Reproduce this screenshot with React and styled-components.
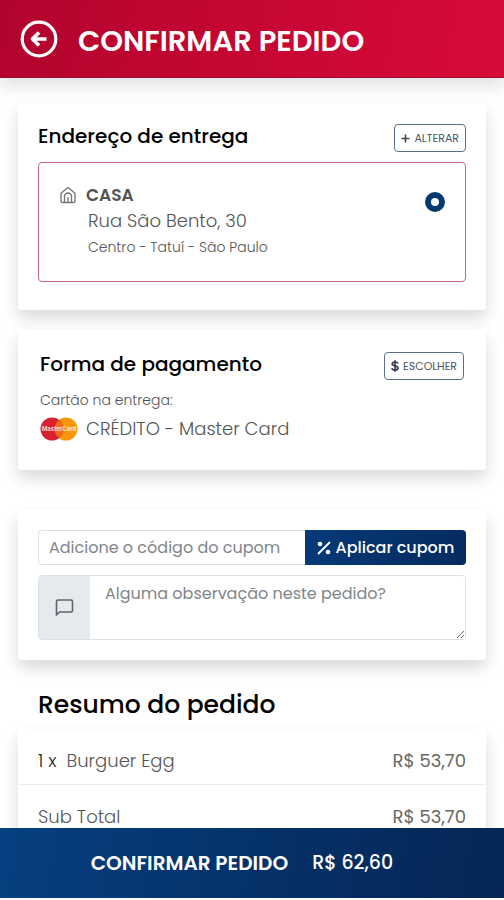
import React from "react";
import styled, { createGlobalStyle } from "styled-components";

const GlobalStyle = createGlobalStyle`
  *, *::before, *::after { box-sizing: border-box; }
  body {
    margin: 0;
    background: #fff;
    color: #111;
    font-family: Poppins, Inter, "Liberation Sans", sans-serif;
    font-size: 18px;
    font-weight: 300;
    line-height: 24px;
  }
  button, input, textarea { font: inherit; }
  h1, h2, p, ul, dl, dd, dt { margin: 0; padding: 0; }
`;

const Page = styled.div`
  display: flex;
  flex-direction: column;
  height: 100vh;
`;

const Header = styled.header`
  flex: none;
  display: flex;
  align-items: center;
  gap: 20px;
  height: 78px;
  padding: 0 20px;
  background: linear-gradient(100deg, #b1042c, #c40632 45%, #d70b3a);
  border-bottom: 1px solid #a00a30;
  box-shadow: 0 8px 16px rgba(0, 0, 0, 0.12);
  z-index: 1;
`;

const BackButton = styled.button`
  display: flex;
  padding: 0;
  border: 0;
  background: none;
  color: #fff;
  cursor: pointer;
`;

const Title = styled.h1`
  color: #fff;
  font-size: 29px;
  font-weight: 600;
  line-height: 40px;
  padding-top: 4px;
`;

const Content = styled.main`
  flex: 1;
  min-height: 0;
  overflow-y: auto;
  scrollbar-width: none;
  display: flex;
  flex-direction: column;
  gap: 20px;
  padding: 26px 18px;
`;

const Card = styled.section`
  flex: none;
  padding: ${(p) => p.$padding || "20px 20px 28px"};
  margin-top: ${(p) => (p.$spaced ? "20px" : "0")};
  background: #fff;
  border-radius: 4px;
  box-shadow: 0 8px 16px rgba(0, 0, 0, 0.15);
`;

const CardHeader = styled.div`
  display: flex;
  align-items: flex-start;
  justify-content: space-between;
`;

const CardTitle = styled.h2`
  color: #000;
  font-size: 20px;
  font-weight: 500;
  line-height: 24px;
`;

const OutlineButton = styled.button`
  display: flex;
  align-items: center;
  gap: 4px;
  height: 28px;
  padding: 0 6px;
  border: 1px solid #5b6e8c;
  border-radius: 4px;
  background: #fff;
  color: #4c5560;
  font-size: 11px;
  font-weight: 400;
  line-height: 16px;
  cursor: pointer;
`;

const AddressOption = styled.label`
  display: grid;
  grid-template-columns: 18px 1fr 20px;
  column-gap: 9px;
  margin-top: 10px;
  padding: 20px;
  min-height: 120px;
  border: 1px solid #c4677f;
  border-radius: 4px;
  color: #555;
  cursor: pointer;
`;

const AddressIcon = styled.span`
  display: flex;
  align-items: center;
  height: 24px;
`;

const AddressName = styled.strong`
  display: block;
  color: #555;
  font-size: 17px;
  font-weight: 600;
`;

const AddressLine = styled.span`
  display: block;
  padding-left: 2px;
  line-height: 28px;
`;

const Small = styled.span`
  display: block;
  color: #555;
  font-size: 14px;
  line-height: 24px;
`;

const AddressRegion = styled(Small)`
  padding-left: 2px;
`;

const PaymentType = styled(Small)`
  margin-top: 8px;
`;

const Radio = styled.input.attrs({ type: "radio" })`
  appearance: none;
  width: 20px;
  height: 20px;
  margin: 9px 0 0;
  border: 6px solid #04396f;
  border-radius: 50%;
  background: #fff;
`;

const PaymentMethod = styled.p`
  display: flex;
  align-items: center;
  gap: 8px;
  line-height: 34px;
  color: #555;
`;

const CouponForm = styled.form`
  display: flex;
  height: 35px;
`;

const CouponInput = styled.input`
  flex: 1;
  min-width: 0;
  padding: 0 10px;
  border: 1px solid #dde1e5;
  border-right: 0;
  border-radius: 4px 0 0 4px;
  color: #444;
  font-size: 16px;
  font-weight: 400;
  &::placeholder { color: #80868b; opacity: 1; }
`;

const CouponButton = styled.button`
  flex: none;
  display: flex;
  align-items: center;
  justify-content: center;
  gap: 5px;
  width: 161px;
  padding: 0;
  border: 0;
  border-radius: 0 4px 4px 0;
  background: linear-gradient(100deg, #063a78, #052b5f);
  color: #fff;
  font-size: 16px;
  font-weight: 500;
  cursor: pointer;
`;

const NoteField = styled.label`
  display: flex;
  height: 65px;
  margin-top: 10px;
  border: 1px solid #dde1e5;
  border-radius: 4px;
  overflow: hidden;
`;

const NoteIcon = styled.span`
  flex: none;
  display: flex;
  align-items: center;
  justify-content: center;
  width: 51px;
  background: #e6eaed;
  color: #5b6472;
`;

const NoteInput = styled.textarea`
  flex: 1;
  min-width: 0;
  padding: 6px 15px;
  border: 0;
  resize: vertical;
  color: #444;
  font-size: 16px;
  font-weight: 400;
  &::placeholder { color: #80868b; opacity: 1; }
`;

const Summary = styled.section`
  flex: none;
  margin-top: 9px;
`;

const SummaryTitle = styled.h2`
  padding: 0 20px;
  color: #000;
  font-size: 25px;
  font-weight: 500;
  line-height: 32px;
`;

const SummaryList = styled.dl`
  margin-top: 8px;
  border-radius: 4px;
  background: #fff;
  box-shadow: 0 8px 16px rgba(0, 0, 0, 0.15);
`;

const SummaryRow = styled.div`
  display: flex;
  justify-content: space-between;
  padding: 20px 20px 11px;
  color: #555;
  & + & { border-top: 1px solid #ededed; }
`;

const Quantity = styled.span`
  margin-right: 10px;
  color: #222;
`;

const Price = styled.dd`
  color: #666;
  font-weight: 400;
`;

const ConfirmButton = styled.button`
  flex: none;
  display: flex;
  align-items: center;
  justify-content: center;
  gap: 24px;
  height: 70px;
  margin-bottom: 2px;
  padding: 0 40px 0 20px;
  border: 0;
  background: linear-gradient(100deg, #073f80, #05336c 45%, #052654);
  color: #fff;
  font-size: 19px;
  z-index: 1;
  cursor: pointer;
`;

const ConfirmLabel = styled.strong`
  font-size: 20px;
  font-weight: 600;
`;

const ConfirmTotal = styled.span`
  font-weight: 500;
`;

function BackIcon() {
  return (
    <svg width="38" height="38" viewBox="0 0 38 38" fill="none" stroke="currentColor" aria-hidden="true">
      <circle cx="19" cy="19" r="16.8" strokeWidth="3.2" />
      <path d="M26.5 19H12.5M19 12.500L12.500 19l6.500 6.500" strokeWidth="3.600" strokeLinejoin="round" />
    </svg>
  );
}

function HomeIcon() {
  return (
    <svg width="18" height="18" viewBox="0 0 18 18" fill="none" stroke="#777" strokeWidth="1.400" strokeLinejoin="round" aria-hidden="true">
      <path d="M2 7.200L9 1.500l7 5.700v7.800a1.500 1.500 0 0 1-1.500 1.500h-11A1.500 1.500 0 0 1 2 15z" />
      <path d="M5.500 16v-5.500a3.500 3.500 0 0 1 7 0V16M9 16v-5" />
    </svg>
  );
}

function PlusIcon() {
  return (
    <svg width="9" height="9" viewBox="0 0 9 9" stroke="#444" strokeWidth="1.600" aria-hidden="true">
      <path d="M4.500 0.500v8M0.500 4.500h8" />
    </svg>
  );
}

function DollarIcon() {
  return (
    <svg width="8" height="12" viewBox="0 0 8 12" fill="none" stroke="#39414d" strokeWidth="1.700" aria-hidden="true">
      <path d="M7 3.600C6.700 2.500 5.600 2 4 2 2.300 2 1.200 2.700 1.200 3.900 1.200 6.600 7 5.200 7 8c0 1.300-1.200 2-3 2-1.700 0-2.900-.700-3.100-1.900M4 .300v11.400" />
    </svg>
  );
}

function PercentIcon() {
  return (
    <svg width="14" height="14" viewBox="0 0 14 14" aria-hidden="true">
      <path d="M12.500 1.500l-11 11" stroke="#fff" strokeWidth="1.800" strokeLinecap="round" />
      <circle cx="3" cy="3" r="2.300" fill="#fff" />
      <circle cx="11" cy="11" r="2.300" fill="#fff" />
    </svg>
  );
}

function MessageIcon() {
  return (
    <svg width="19" height="19" viewBox="0 0 19 19" fill="none" stroke="currentColor" strokeWidth="1.600" strokeLinejoin="round" aria-hidden="true">
      <path d="M1.500 17V3.500a1.500 1.500 0 0 1 1.500-1.500h13a1.500 1.500 0 0 1 1.500 1.500v9a1.500 1.500 0 0 1-1.500 1.500H4.500z" />
    </svg>
  );
}

function MasterCardLogo() {
  return (
    <svg width="38" height="24" viewBox="0 0 38 24" role="img" aria-label="MasterCard">
      <circle cx="26" cy="12" r="11.500" fill="#f9970c" />
      <circle cx="12" cy="12" r="11.500" fill="#d9202f" />
      <path d="M19 2.900a11.500 11.500 0 0 1 0 18.200a11.500 11.500 0 0 1 0-18.200z" fill="#ee6a1c" />
      <text x="19" y="14" textAnchor="middle" fill="#fff" fillOpacity="0.800" fontFamily="Inter, sans-serif" fontSize="6" fontWeight="700">
        MasterCard
      </text>
    </svg>
  );
}

export default function App() {
  return (
    <>
      <GlobalStyle />
      <Page>
        <Header>
          <BackButton type="button" aria-label="Voltar">
            <BackIcon />
          </BackButton>
          <Title>CONFIRMAR PEDIDO</Title>
        </Header>

        <Content>
          <Card>
            <CardHeader>
              <CardTitle>Endereço de entrega</CardTitle>
              <OutlineButton type="button">
                <PlusIcon />
                ALTERAR
              </OutlineButton>
            </CardHeader>
            <AddressOption>
              <AddressIcon>
                <HomeIcon />
              </AddressIcon>
              <span>
                <AddressName>CASA</AddressName>
                <AddressLine>Rua São Bento, 30</AddressLine>
                <AddressRegion>Centro - Tatuí - São Paulo</AddressRegion>
              </span>
              <Radio name="endereco" defaultChecked />
            </AddressOption>
          </Card>

          <Card $padding="22px 22px 24px">
            <CardHeader>
              <CardTitle>Forma de pagamento</CardTitle>
              <OutlineButton type="button">
                <DollarIcon />
                ESCOLHER
              </OutlineButton>
            </CardHeader>
            <PaymentType>Cartão na entrega:</PaymentType>
            <PaymentMethod>
              <MasterCardLogo />
              CRÉDITO - Master Card
            </PaymentMethod>
          </Card>

          <Card $spaced $padding="20px">
            <CouponForm onSubmit={(e) => e.preventDefault()}>
              <CouponInput type="text" aria-label="Código do cupom" placeholder="Adicione o código do cupom" />
              <CouponButton type="submit">
                <PercentIcon />
                Aplicar cupom
              </CouponButton>
            </CouponForm>
            <NoteField>
              <NoteIcon>
                <MessageIcon />
              </NoteIcon>
              <NoteInput aria-label="Observação" placeholder="Alguma observação neste pedido?" />
            </NoteField>
          </Card>

          <Summary>
            <SummaryTitle>Resumo do pedido</SummaryTitle>
            <SummaryList>
              <SummaryRow>
                <dt>
                  <Quantity>1 x</Quantity>
                  Burguer Egg
                </dt>
                <Price>R$ 53,70</Price>
              </SummaryRow>
              <SummaryRow>
                <dt>Sub Total</dt>
                <Price>R$ 53,70</Price>
              </SummaryRow>
            </SummaryList>
          </Summary>
        </Content>

        <ConfirmButton type="button">
          <ConfirmLabel>CONFIRMAR PEDIDO</ConfirmLabel>
          <ConfirmTotal>R$ 62,60</ConfirmTotal>
        </ConfirmButton>
      </Page>
    </>
  );
}
